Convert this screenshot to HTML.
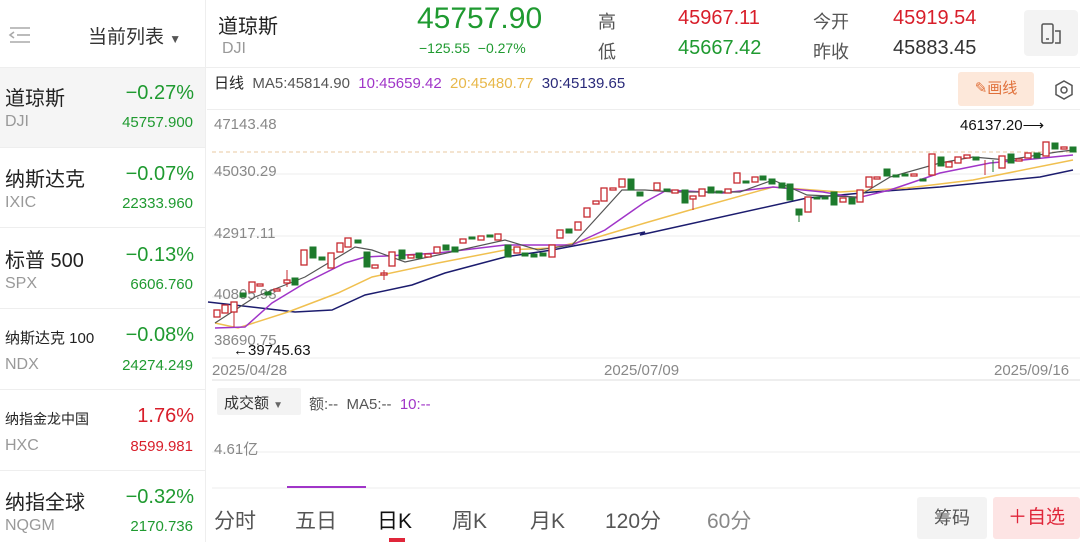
<!DOCTYPE html>
<html><head><meta charset="utf-8"><style>
*{margin:0;padding:0;box-sizing:border-box}
body{width:1080px;height:542px;overflow:hidden;background:#fff;font-family:"Liberation Sans","Noto Sans CJK SC",sans-serif;position:relative;color:#222}
.a{position:absolute;white-space:nowrap}
.gr{color:#1f9a30}.rd{color:#d81e2a}.gy{color:#999}
.row{position:absolute;left:0;width:205px;height:80px;border-bottom:1px solid #eee}
.r{fill:#fff;stroke:#c62a2f;stroke-width:1.3}
.g{fill:#1d7a2c;stroke:#1d7a2c;stroke-width:1}
</style></head><body>
<!-- left header -->
<svg class="a" style="left:8px;top:26px" width="24" height="18"><g stroke="#aaa" stroke-width="1.6" fill="none"><line x1="2" y1="2" x2="22" y2="2"/><line x1="9" y1="9" x2="22" y2="9"/><line x1="2" y1="16" x2="22" y2="16"/><path d="M6 6 L2 9 L6 12"/></g></svg>
<div class="a" style="left:88px;top:22px;font-size:19px;color:#333">当前列表 <span style="font-size:12px;color:#555">▼</span></div>
<div class="a" style="left:205px;top:0;width:1px;height:542px;background:#eee"></div>
<div class="a" style="left:0;top:67px;width:1080px;height:1px;background:#eee"></div>
<!-- left list -->
<div class="row" style="top:68px;background:#f5f5f5"></div>
<div class="a" style="left:5px;top:82px;font-size:20px">道琼斯</div><div class="a gr" style="right:886px;top:82px;font-size:20px">−0.27%</div>
<div class="a gy" style="left:5px;top:113px;font-size:16px">DJI</div><div class="a gr" style="right:887px;top:114px;font-size:15px">45757.900</div>
<div class="row" style="top:148px"></div>
<div class="a" style="left:5px;top:163px;font-size:20px">纳斯达克</div><div class="a gr" style="right:886px;top:163px;font-size:20px">−0.07%</div>
<div class="a gy" style="left:5px;top:194px;font-size:16px">IXIC</div><div class="a gr" style="right:887px;top:195px;font-size:15px">22333.960</div>
<div class="row" style="top:229px"></div>
<div class="a" style="left:5px;top:244px;font-size:20px">标普 500</div><div class="a gr" style="right:886px;top:244px;font-size:20px">−0.13%</div>
<div class="a gy" style="left:5px;top:275px;font-size:16px">SPX</div><div class="a gr" style="right:887px;top:276px;font-size:15px">6606.760</div>
<div class="row" style="top:310px"></div>
<div class="a" style="left:5px;top:327px;font-size:15px">纳斯达克 100</div><div class="a gr" style="right:886px;top:324px;font-size:20px">−0.08%</div>
<div class="a gy" style="left:5px;top:356px;font-size:16px">NDX</div><div class="a gr" style="right:887px;top:357px;font-size:15px">24274.249</div>
<div class="row" style="top:391px"></div>
<div class="a" style="left:5px;top:409px;font-size:14px">纳指金龙中国</div><div class="a rd" style="right:886px;top:405px;font-size:20px">1.76%</div>
<div class="a gy" style="left:5px;top:437px;font-size:16px">HXC</div><div class="a rd" style="right:887px;top:438px;font-size:15px">8599.981</div>
<div class="a" style="left:5px;top:486px;font-size:20px">纳指全球</div><div class="a gr" style="right:886px;top:486px;font-size:20px">−0.32%</div>
<div class="a gy" style="left:5px;top:517px;font-size:16px">NQGM</div><div class="a gr" style="right:887px;top:518px;font-size:15px">2170.736</div>
<!-- top header -->
<div class="a" style="left:218px;top:10px;font-size:20px">道琼斯</div>
<div class="a gy" style="left:222px;top:40px;font-size:16px">DJI</div>
<div class="a gr" style="left:417px;top:2px;font-size:30px">45757.90</div>
<div class="a gr" style="left:419px;top:40px;font-size:14px">−125.55&nbsp; −0.27%</div>
<div class="a" style="left:598px;top:8px;font-size:18px;color:#555">高</div>
<div class="a rd" style="left:678px;top:7px;font-size:20px">45967.11</div>
<div class="a" style="left:598px;top:38px;font-size:18px;color:#555">低</div>
<div class="a gr" style="left:678px;top:37px;font-size:20px">45667.42</div>
<div class="a" style="left:813px;top:8px;font-size:18px;color:#555">今开</div>
<div class="a rd" style="left:893px;top:7px;font-size:20px">45919.54</div>
<div class="a" style="left:813px;top:38px;font-size:18px;color:#555">昨收</div>
<div class="a" style="left:893px;top:37px;font-size:20px;color:#333">45883.45</div>
<div class="a" style="left:1024px;top:10px;width:54px;height:46px;background:#f3f3f3;border-radius:4px"></div>
<svg class="a" style="left:1040px;top:22px" width="24" height="24"><g stroke="#555" stroke-width="1.5" fill="none"><rect x="2" y="2" width="11" height="19" rx="1.5"/><path d="M15 9 H20 V21 H15"/><line x1="6" y1="17" x2="9" y2="17"/></g></svg>
<!-- MA row -->
<div class="a" style="left:214px;top:72px;font-size:15px;color:#555"><span style="color:#222">日线</span>&nbsp; MA5:45814.90&nbsp; <span style="color:#a035c8">10:45659.42</span>&nbsp; <span style="color:#e8b84a">20:45480.77</span>&nbsp; <span style="color:#2a2a7a">30:45139.65</span></div>
<div class="a" style="left:958px;top:72px;width:76px;height:34px;background:#fde8da;border-radius:3px;color:#e0703a;font-size:15px;line-height:34px;text-align:center">✎画线</div>
<svg class="a" style="left:1053px;top:79px" width="22" height="22"><polygon points="11,2 19,6.5 19,15.5 11,20 3,15.5 3,6.5" fill="none" stroke="#555" stroke-width="1.5"/><circle cx="11" cy="11" r="3" fill="none" stroke="#555" stroke-width="1.5"/></svg>
<div class="a" style="left:207px;top:109px;width:873px;height:1px;background:#eee"></div>
<!-- chart -->
<svg class="a" style="left:0;top:0" width="1080" height="542">
<g stroke="#eee" stroke-width="1"><line x1="212" y1="174" x2="1080" y2="174"/><line x1="212" y1="236" x2="1080" y2="236"/><line x1="212" y1="297" x2="1080" y2="297"/><line x1="212" y1="358" x2="1080" y2="358"/><line x1="212" y1="452" x2="1080" y2="452"/><line x1="212" y1="488" x2="1080" y2="488"/></g>
<line x1="212" y1="152" x2="1080" y2="152" stroke="#e8c8a0" stroke-dasharray="4,3"/>
<line x1="212" y1="380" x2="1080" y2="380" stroke="#ddd"/>
<g font-size="15" fill="#888" font-family="Liberation Sans"><text x="214" y="129">47143.48</text><text x="214" y="176">45030.29</text><text x="214" y="238">42917.11</text><text x="214" y="299">40805.93</text><text x="214" y="345">38690.75</text>
<text x="212" y="375">2025/04/28</text><text x="604" y="375">2025/07/09</text><text x="994" y="375">2025/09/16</text></g>
<text x="233" y="355" font-size="15" fill="#111">←39745.63</text>
<text x="960" y="130" font-size="15" fill="#111">46137.20⟶</text>
<g fill="none" stroke-width="1.5">
<polyline stroke="#1c1c6e" points="208,302 295,312 332,310 365,295 412,285 445,273 505,257 552,250 605,240 645,232 640,235 807,198 873,192 940,187 1040,177 1073,170"/>
<polyline stroke="#f0c050" points="215,323 238,328 288,312 338,293 372,277 438,263 505,250 552,248 588,240 645,223 690,210 773,187 840,192 907,188 973,180 1073,160"/>
<polyline stroke="#a035c8" points="215,328 245,327 272,303 305,283 345,263 365,257 405,255 438,253 505,245 572,245 605,230 645,202 667,190 723,193 773,187 823,192 857,198 890,190 940,173 990,163 1023,160 1073,155"/>
<polyline stroke="#555" stroke-width="1.2" points="215,323 255,297 305,277 355,247 372,250 405,262 438,255 505,240 538,250 572,245 622,190 645,190 673,192 740,192 773,180 807,195 857,197 890,177 940,163 973,157 1007,160 1057,152 1073,150"/>
</g>
<g>
<rect class="r" x="214" y="310" width="6" height="7"/><rect class="r" x="222" y="305" width="6" height="8"/><rect class="r" x="231" y="302" width="6" height="10"/><line x1="234" y1="312" x2="234" y2="327" stroke="#c62a2f"/>
<rect class="g" x="240" y="293" width="6" height="4"/><rect class="r" x="249" y="282" width="6" height="10"/><rect class="r" x="257" y="284" width="6" height="2"/><rect class="g" x="265" y="292" width="6" height="3"/><rect class="r" x="274" y="289" width="6" height="2"/>
<line x1="287" y1="270" x2="287" y2="287" stroke="#c62a2f"/><rect class="r" x="284" y="280" width="6" height="3"/><rect class="g" x="292" y="278" width="6" height="7"/>
<rect class="r" x="301" y="250" width="6" height="15"/><rect class="g" x="310" y="247" width="6" height="11"/><rect class="g" x="319" y="257" width="6" height="3"/><rect class="r" x="328" y="253" width="6" height="15"/><rect class="r" x="337" y="243" width="6" height="9"/><rect class="r" x="345" y="238" width="6" height="9"/><rect class="g" x="355" y="240" width="6" height="3"/><rect class="g" x="364" y="252" width="6" height="15"/><rect class="r" x="372" y="265" width="6" height="3"/><rect class="r" x="381" y="273" width="6" height="2"/><line x1="384" y1="270" x2="384" y2="280" stroke="#c62a2f"/>
<rect class="r" x="389" y="252" width="6" height="14"/><rect class="g" x="399" y="250" width="6" height="9"/><rect class="r" x="408" y="255" width="6" height="3"/><rect class="g" x="416" y="253" width="6" height="5"/><rect class="r" x="425" y="254" width="6" height="3"/><rect class="r" x="434" y="247" width="6" height="6"/><rect class="g" x="443" y="245" width="6" height="5"/><rect class="g" x="452" y="247" width="6" height="5"/><rect class="r" x="460" y="239" width="6" height="4"/><rect class="g" x="469" y="237" width="6" height="2"/><rect class="r" x="478" y="236" width="6" height="4"/><rect class="g" x="487" y="235" width="6" height="2"/><rect class="r" x="495" y="234" width="6" height="6"/>
<rect class="g" x="505" y="245" width="6" height="12"/><rect class="r" x="514" y="247" width="6" height="6"/><rect class="g" x="522" y="253" width="6" height="3"/><rect class="g" x="531" y="254" width="6" height="3"/><rect class="g" x="540" y="253" width="6" height="3"/><rect class="r" x="549" y="245" width="6" height="12"/><rect class="r" x="557" y="230" width="6" height="8"/><rect class="g" x="566" y="229" width="6" height="4"/><rect class="r" x="575" y="222" width="6" height="8"/><rect class="r" x="584" y="208" width="6" height="9"/><rect class="r" x="593" y="201" width="6" height="3"/><rect class="r" x="601" y="188" width="6" height="13"/><rect class="r" x="610" y="188" width="6" height="2"/><rect class="r" x="619" y="179" width="6" height="8"/><rect class="g" x="628" y="179" width="6" height="11"/><rect class="g" x="637" y="192" width="6" height="4"/>
<rect class="r" x="654" y="183" width="6" height="7"/><rect class="g" x="664" y="189" width="6" height="2"/><rect class="r" x="672" y="190" width="6" height="3"/><rect class="g" x="682" y="190" width="6" height="13"/><rect class="r" x="690" y="196" width="6" height="3"/><line x1="693" y1="199" x2="693" y2="210" stroke="#c62a2f"/><rect class="r" x="699" y="189" width="6" height="7"/><rect class="g" x="708" y="187" width="6" height="6"/><rect class="g" x="716" y="191" width="6" height="2"/><rect class="r" x="725" y="189" width="6" height="4"/><rect class="r" x="734" y="173" width="6" height="10"/><rect class="g" x="743" y="181" width="6" height="2"/><rect class="r" x="752" y="177" width="6" height="5"/><rect class="g" x="760" y="176" width="6" height="4"/><rect class="g" x="769" y="179" width="6" height="5"/><rect class="g" x="779" y="183" width="6" height="5"/><rect class="g" x="787" y="184" width="6" height="16"/><rect class="g" x="796" y="209" width="6" height="6"/><line x1="799" y1="215" x2="799" y2="222" stroke="#1d7a2c"/><rect class="r" x="805" y="197" width="6" height="15"/><rect class="g" x="814" y="197" width="6" height="2"/><rect class="g" x="822" y="197" width="6" height="2"/><rect class="g" x="831" y="192" width="6" height="13"/><rect class="r" x="840" y="198" width="6" height="4"/><rect class="g" x="849" y="198" width="6" height="6"/><rect class="r" x="857" y="190" width="6" height="12"/><rect class="r" x="866" y="177" width="6" height="10"/><rect class="r" x="874" y="177" width="6" height="2"/><rect class="g" x="884" y="169" width="6" height="7"/><rect class="g" x="893" y="175" width="6" height="2"/><rect class="g" x="902" y="174" width="6" height="2"/><rect class="r" x="911" y="174" width="6" height="2"/><rect class="g" x="920" y="179" width="6" height="2"/>
<rect class="r" x="929" y="154" width="6" height="21"/><rect class="g" x="938" y="157" width="6" height="9"/><rect class="r" x="946" y="162" width="6" height="5"/><rect class="r" x="955" y="157" width="6" height="6"/><rect class="r" x="964" y="155" width="6" height="3"/><rect class="g" x="973" y="157" width="6" height="3"/><line x1="985" y1="160" x2="985" y2="175" stroke="#c62a2f"/><line x1="993" y1="160" x2="993" y2="172" stroke="#1d7a2c"/><rect class="r" x="999" y="156" width="6" height="12"/><rect class="g" x="1008" y="154" width="6" height="9"/><rect class="r" x="1016" y="159" width="6" height="2"/><rect class="r" x="1025" y="153" width="6" height="5"/><rect class="g" x="1034" y="153" width="6" height="5"/><rect class="r" x="1043" y="142" width="6" height="14"/><rect class="g" x="1052" y="143" width="6" height="6"/><rect class="r" x="1061" y="147" width="6" height="2"/><rect class="g" x="1070" y="147" width="6" height="5"/>
</g>
<line x1="287" y1="487" x2="366" y2="487" stroke="#a035c8" stroke-width="2"/>
<rect x="389" y="538" width="16" height="6" fill="#e0263a"/>
</svg>
<!-- volume header -->
<div class="a" style="left:217px;top:388px;width:84px;height:27px;background:#f3f3f3;border-radius:2px"></div>
<div class="a" style="left:224px;top:392px;font-size:15px;color:#333">成交额 <span style="font-size:10px;color:#666">▼</span></div>
<div class="a" style="left:309px;top:393px;font-size:15px;color:#555">额:--&nbsp; MA5:--&nbsp; <span style="color:#a035c8">10:--</span></div>
<div class="a" style="left:214px;top:438px;font-size:15px;color:#888">4.61亿</div>
<!-- bottom tabs -->
<div class="a" style="left:214px;top:505px;font-size:21px;color:#555">分时</div>
<div class="a" style="left:295px;top:505px;font-size:21px;color:#555">五日</div>
<div class="a" style="left:377px;top:505px;font-size:21px;color:#111">日K</div>
<div class="a" style="left:452px;top:505px;font-size:21px;color:#555">周K</div>
<div class="a" style="left:530px;top:505px;font-size:21px;color:#555">月K</div>
<div class="a" style="left:605px;top:505px;font-size:21px;color:#555">120分</div>
<div class="a" style="left:707px;top:505px;font-size:21px;color:#888">60分</div>
<div class="a" style="left:917px;top:497px;width:70px;height:42px;background:#f3f3f3;border-radius:3px;font-size:18px;line-height:42px;text-align:center;color:#555">筹码</div>
<div class="a" style="left:993px;top:497px;width:87px;height:42px;background:#fde4e4;border-radius:3px;font-size:19px;line-height:42px;text-align:center;color:#e0263a">＋自选</div>
</body></html>
